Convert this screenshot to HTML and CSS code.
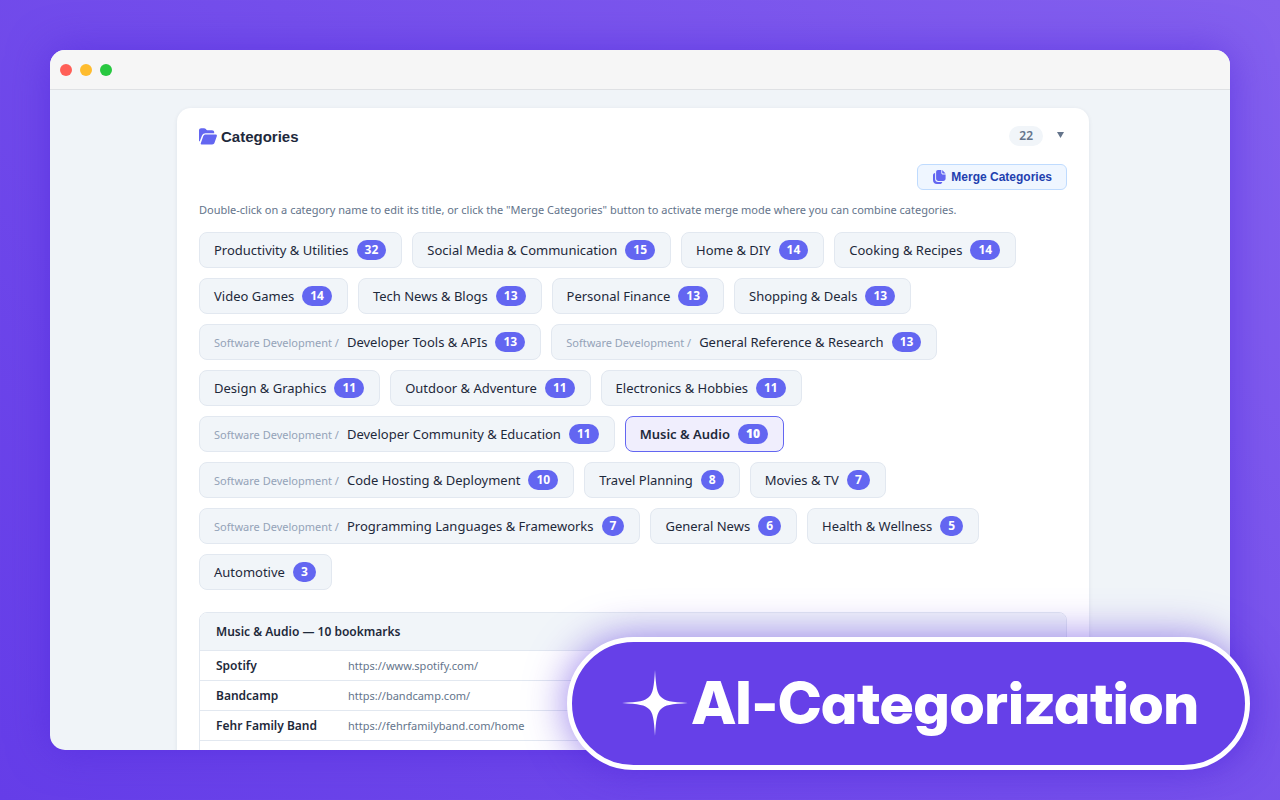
FILE: index.html
```html
<!DOCTYPE html>
<html lang="en">
<head>
<meta charset="utf-8">
<title>Bookmark categories</title>
<meta name="viewport" content="width=device-width, initial-scale=1">
<link rel="stylesheet" href="styles.css">
</head>
<body>
<div class="window">
  <div class="titlebar">
    <span class="dot red"></span>
    <span class="dot yellow"></span>
    <span class="dot green"></span>
  </div>
  <main class="page">
    <section class="card">
      <header class="card-head">
        <svg class="folder" viewBox="0 0 18 17" aria-hidden="true">
          <path d="M0 13V2.500C0 1.100 1 .3 2.200 .3H5c.8 0 1.300.3 1.800.8l.6.6c.4.4.8.5 1.300.5H13c1.300 0 2.200.9 2.200 2.100V5.200H6.500c-1.500 0-2.700.8-3.400 2.100L.6 13.500z"/>
          <path d="M1.700 15.400 4.300 8.100C4.700 7 5.500 6.400 6.600 6.400H16.500c1.100 0 1.700.9 1.300 1.900l-2.300 6.500c-.4 1.100-1.200 1.700-2.300 1.700H2.500c-.6 0-1-.5-.8-1.100z"/>
        </svg>
        <h1>Categories</h1>
        <span class="total">22</span>
        <button class="toggle" type="button" aria-label="Collapse"><svg viewBox="0 0 7 6"><path d="M0 0h7L3.500 6z"/></svg></button>
      </header>
      <div class="actions">
        <button class="merge" type="button">
          <svg viewBox="0 0 13 14" aria-hidden="true">
            <path d="M5 0H8.300V2.800C8.300 3.900 9 4.600 10 4.600h2.600V8.500c0 1.500-.9 2.400-2.400 2.400H5.500C4 10.900 3.100 10 3.100 8.500V1.900C3.100.8 3.900 0 5 0z"/>
            <path d="M9.200 0 12.600 3.600H10c-.5 0-.8-.3-.8-.8z"/>
            <path d="M2.100 2.900V9.200c0 1.600 1.200 2.700 2.800 2.700H9.300C9 13.200 8 14 6.700 14H4C1.600 14 0 12.400 0 10V5.200C0 4 .8 3.100 2.100 2.900z"/>
          </svg>
          Merge Categories
        </button>
      </div>
      <p class="hint">Double-click on a category name to edit its title, or click the "Merge Categories" button to activate merge mode where you can combine categories.</p>
      <ul class="chips">
        <li>Productivity &amp; Utilities <b>32</b></li>
        <li>Social Media &amp; Communication <b>15</b></li>
        <li>Home &amp; DIY <b>14</b></li>
        <li>Cooking &amp; Recipes <b>14</b></li>
        <li>Video Games <b>14</b></li>
        <li>Tech News &amp; Blogs <b>13</b></li>
        <li>Personal Finance <b>13</b></li>
        <li>Shopping &amp; Deals <b>13</b></li>
        <li><small>Software Development /</small> Developer Tools &amp; APIs <b>13</b></li>
        <li><small>Software Development /</small> General Reference &amp; Research <b>13</b></li>
        <li>Design &amp; Graphics <b>11</b></li>
        <li>Outdoor &amp; Adventure <b>11</b></li>
        <li>Electronics &amp; Hobbies <b>11</b></li>
        <li><small>Software Development /</small> Developer Community &amp; Education <b>11</b></li>
        <li class="active">Music &amp; Audio <b>10</b></li>
        <li><small>Software Development /</small> Code Hosting &amp; Deployment <b>10</b></li>
        <li>Travel Planning <b>8</b></li>
        <li>Movies &amp; TV <b>7</b></li>
        <li><small>Software Development /</small> Programming Languages &amp; Frameworks <b>7</b></li>
        <li>General News <b>6</b></li>
        <li>Health &amp; Wellness <b>5</b></li>
        <li>Automotive <b>3</b></li>
      </ul>
      <div class="bookmarks">
        <h2>Music &amp; Audio — 10 bookmarks</h2>
        <table>
          <tr><th scope="row">Spotify</th><td>https://www.spotify.com/</td></tr>
          <tr><th scope="row">Bandcamp</th><td>https://bandcamp.com/</td></tr>
          <tr><th scope="row">Fehr Family Band</th><td>https://fehrfamilyband.com/home</td></tr>
          <tr><th scope="row"></th><td></td></tr>
        </table>
      </div>
    </section>
  </main>
</div>
<div class="banner">
  <svg viewBox="0 0 66 66" aria-hidden="true"><path d="M33 0C34 17 35 23 39 27C43 31 49 32 66 33C49 34 43 35 39 39C35 43 34 49 33 66C32 49 31 43 27 39C23 35 17 34 0 33C17 32 23 31 27 27C31 23 32 17 33 0z"/></svg>
  <span>AI-Categorization</span>
</div>
</body>
</html>
```
FILE: styles.css
```css
* { box-sizing: border-box; }
body {
  margin: 0;
  height: 100vh;
  padding: 50px;
  overflow: hidden;
  position: relative;
  background: linear-gradient(45deg, #653de8, #8460ee);
  font-family: "Noto Sans", "Open Sans", sans-serif;
  font-size: 13px;
  color: #1e293b;
}
.window {
  height: 100%;
  display: flex;
  flex-direction: column;
  overflow: hidden;
  border-radius: 15px;
  background: #f0f4f8;
  box-shadow: 0 0 40px rgba(80, 40, 220, .6);
}
.titlebar {
  display: flex;
  flex: none;
  align-items: center;
  gap: 8px;
  height: 40px;
  padding: 0 10px;
  background: #f6f6f6;
  border-bottom: 1px solid #dfe1e4;
}
.dot {
  width: 12px;
  height: 12px;
  border-radius: 50%;
}
.red { background: #ff5f57; }
.yellow { background: #febc2e; }
.green { background: #28c840; }

.page {
  flex: 1;
  min-height: 0;
  padding: 18px 14px 0 0;
}
.card {
  max-width: 912px;
  margin: 0 auto;
  padding: 18px 22px;
  background: #fff;
  border-radius: 14px;
  box-shadow: 0 1px 4px rgba(30, 41, 59, .08);
}
.card-head {
  display: flex;
  align-items: center;
  gap: 4px;
  height: 20px;
}
.folder {
  width: 18px;
  height: 17px;
  fill: #6366f1;
}
h1 {
  margin: 0;
  flex: 1;
  font: bold 15px "Liberation Sans", Arial, sans-serif;
}
.total {
  padding: 0 10px;
  border-radius: 10px;
  background: #f1f5f9;
  color: #64748b;
  font-size: 12px;
  font-weight: 600;
  line-height: 20px;
}
.toggle {
  padding: 0 3px 3px;
  margin-left: 7px;
  border: 0;
  background: none;
}
.toggle svg {
  display: block;
  width: 7px;
  height: 6px;
  fill: #64748b;
}
.actions {
  display: flex;
  justify-content: flex-end;
  margin-top: 18px;
}
.merge {
  display: flex;
  align-items: center;
  gap: 5px;
  height: 26px;
  padding: 0 14px 0 15px;
  border: 1px solid #bfdbfe;
  border-radius: 6px;
  background: #eff6ff;
  color: #1e40af;
  font: bold 12px "Liberation Sans", Arial, sans-serif;
}
.merge svg {
  width: 13px;
  height: 14px;
  fill: #6366f1;
}
.hint {
  margin: 12px 0 14px;
  color: #64748b;
  font-size: 11px;
  line-height: 16px;
}

.chips {
  display: flex;
  flex-wrap: wrap;
  gap: 10px;
  margin: 0;
  padding: 0;
  list-style: none;
}
.chips li {
  display: flex;
  align-items: center;
  gap: 8px;
  height: 36px;
  padding: 0 15px 0 14px;
  border: 1px solid #e2e8f0;
  border-radius: 8px;
  background: #f1f5f9;
}
.chips small {
  color: #94a3b8;
  font-size: 11px;
}
.chips b {
  padding: 0 8px;
  border-radius: 10px;
  background: #6366f1;
  color: #fff;
  font-size: 12px;
  line-height: 20px;
}
.chips .active {
  border-color: #6366f1;
  background: #f0eefd;
  font-weight: 600;
}

.bookmarks {
  margin-top: 22px;
  border: 1px solid #e2e8f0;
  border-radius: 8px;
  overflow: hidden;
}
h2 {
  margin: 0;
  padding: 0 16px;
  background: #f1f5f9;
  border-bottom: 1px solid #e2e8f0;
  font-size: 12px;
  font-weight: 600;
  line-height: 37px;
}
table {
  width: 100%;
  border-spacing: 0;
}
th, td {
  height: 30px;
  padding: 0 16px;
  border-bottom: 1px solid #e2e8f0;
  text-align: left;
}
th {
  width: 148px;
  font-size: 12px;
  font-weight: 600;
  white-space: nowrap;
}
td {
  padding-left: 0;
  color: #64748b;
  font-size: 11px;
}

/* label lying over the window corner */
.banner {
  position: absolute;
  right: 30px;
  bottom: 30px;
  display: flex;
  align-items: center;
  gap: 4px;
  padding: 24px 46px 26px 50px;
  border: 5px solid #fff;
  border-radius: 70px;
  background: #6640e8;
  box-shadow: 0 0 40px rgba(80, 40, 220, .6);
  color: #fff;
  font-family: "Inter Display", Inter, sans-serif;
  font-feature-settings: "cv11", "calt" 0;
  font-size: 59px;
  font-weight: 800;
  line-height: 73px;
}
.banner svg {
  width: 66px;
  height: 66px;
  fill: #fff;
}
```
